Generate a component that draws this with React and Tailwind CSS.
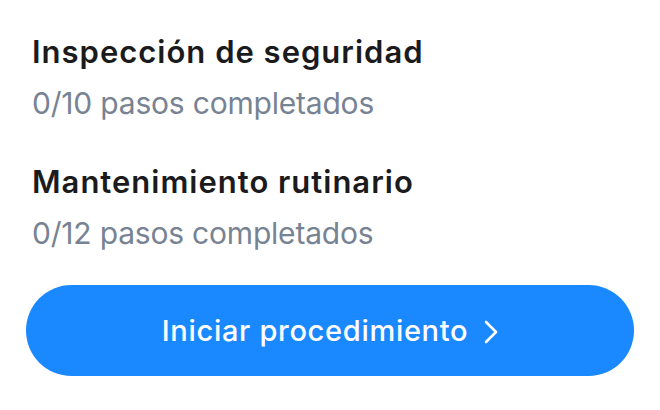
export default function App() {
  const items = [
    { title: "Inspección de seguridad", sub: "0/10 pasos completados" },
    { title: "Mantenimiento rutinario", sub: "0/12 pasos completados" },
  ];
  return (
    <div
      className="w-[660px] h-[410px] bg-white px-[26px] pt-[33px] flex flex-col"
      style={{ fontFamily: "Inter, 'Noto Sans', sans-serif" }}
    >
      <div className="flex flex-col gap-[41px] pl-[6px]">
        {items.map((it) => (
          <div key={it.title} className="flex flex-col gap-[13px]">
            <div className="text-[31px] leading-[38px] font-semibold text-[#1b1b1d] tracking-[1px]">
              {it.title}
            </div>
            <div className="text-[30px] leading-[38px] font-normal text-[#778393] tracking-[-0.2px]">
              {it.sub}
            </div>
          </div>
        ))}
      </div>
      <button className="mt-[33px] h-[91px] w-full rounded-full bg-[#1a89ff] flex items-center justify-center gap-[16px] text-white">
        <span className="text-[29px] font-medium tracking-[0.7px]">
          Iniciar procedimiento
        </span>
        <svg width="14" height="24" viewBox="0 0 14 24" fill="none" className="mt-[2px]">
          <path d="M2 2 L12 12 L2 22" stroke="white" strokeWidth="2.6" strokeLinecap="round" strokeLinejoin="round" />
        </svg>
      </button>
    </div>
  );
}
